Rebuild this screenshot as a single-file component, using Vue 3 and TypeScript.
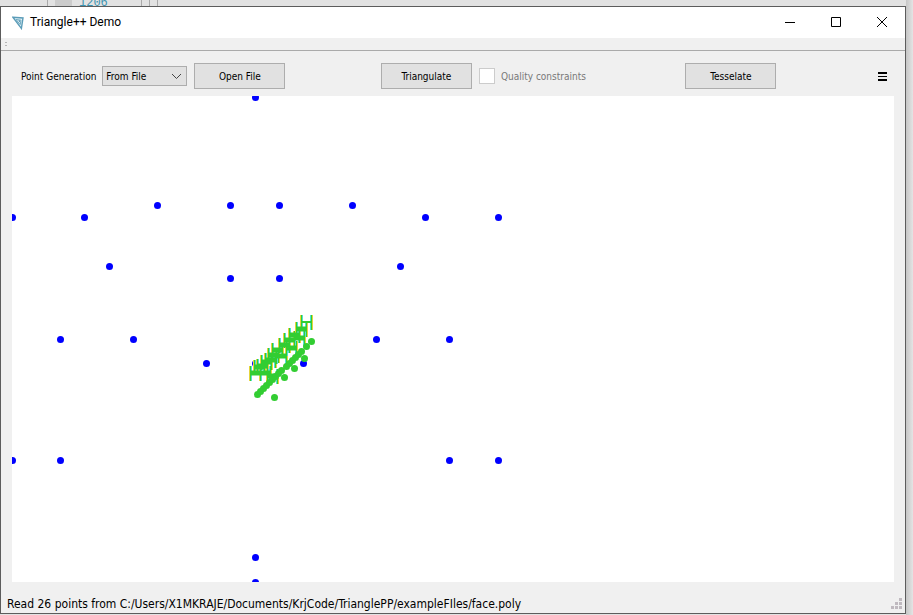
<script setup lang="ts">
import { ref } from 'vue'

type Point = [number, number]

const source = ref('From File')
const quality = ref(false)

const points: Point[] = [
  [243, 1], [0, 121], [72, 121], [145, 109], [218, 109], [267, 109], [340, 109],
  [413, 121], [486, 121], [97, 170], [388, 170], [218, 182], [267, 182],
  [48, 243], [121, 243], [364, 243], [437, 243], [194, 267], [243, 267], [291, 267],
  [0, 364], [48, 364], [437, 364], [486, 364], [243, 461], [243, 486],
]

const marks: Point[] = [
  [245, 298], [248, 295], [251, 292], [254, 289], [257, 286], [260, 283],
  [262, 301], [263, 280], [266, 277], [269, 274], [272, 281], [274, 270],
  [277, 267], [280, 264], [282, 272], [283, 261], [286, 258], [289, 255],
  [292, 262], [294, 250], [299, 245],
]

const labels: Point[] = [
  [237, 270], [241, 264], [244, 263], [247, 270], [248, 259], [252, 257], [254, 273],
  [255, 252], [259, 247], [263, 253], [266, 242], [271, 237], [273, 245], [276, 232],
  [281, 235], [283, 226], [288, 219],
]
</script>

<template>
  <div class="desktop">
    <div class="behind" aria-hidden="true"><i></i><b></b><span>1206</span><i></i><i></i><i></i></div>
    <main class="window">
      <header class="titlebar">
        <svg class="logo" width="13" height="14" viewBox="0 0 13 14">
          <path d="M.8 1.2 11 2 9.4 12.4Z" fill="#e4f3f8" stroke="#5b9cb8" stroke-width="1.4" />
          <path d="M4 3.5 9 4.2 8.2 8.6Z" fill="none" stroke="#6fa9c0" />
          <path d="M6.4 4.6H8V6.5Z" fill="#3c7f9f" />
        </svg>
        <h1>Triangle++ Demo</h1>
        <div class="caption">
          <button type="button" aria-label="Minimize">
            <svg width="11" height="11"><path d="M0 5.5H10" /></svg>
          </button>
          <button type="button" aria-label="Maximize">
            <svg width="11" height="11"><path d="M.5 .5H9.5V9.5H.5Z" /></svg>
          </button>
          <button type="button" aria-label="Close">
            <svg width="11" height="11"><path d="M0 0 10 10M10 0 0 10" /></svg>
          </button>
        </div>
      </header>
      <div class="dock"><i></i><i></i></div>
      <div class="toolbar">
        <div class="group">
          <label for="source">Point Generation</label>
          <div class="combo">
            <select id="source" v-model="source">
              <option>From File</option>
            </select>
            <svg width="11" height="7"><path d="M1 1 5.5 5.5 10 1" /></svg>
          </div>
          <button type="button" class="push">Open File</button>
        </div>
        <div class="group">
          <button type="button" class="push">Triangulate</button>
          <label class="check">
            <input v-model="quality" type="checkbox" />
            <span>Quality constraints</span>
          </label>
        </div>
        <button type="button" class="push">Tesselate</button>
        <button type="button" class="menu" aria-label="Menu">
          <svg width="9" height="9"><path d="M0 0H9V2H0ZM0 4H9V5H0ZM0 7H9V9H0Z" /></svg>
        </button>
      </div>
      <svg class="canvas">
        <circle v-for="(p, i) in points" :key="i" :cx="p[0] + 0.5" :cy="p[1] + 0.5" r="3.5" fill="#00f" />
        <g v-for="(l, i) in labels" :key="'f' + i" :transform="`translate(${l[0]} ${l[1]})`" fill="none">
          <path d="M.5 0V15M12.5 0V15" stroke="#e5d43c" />
          <path d="M2.5 0V15M10.5 0V15" stroke="#55dfd2" />
        </g>
        <g v-for="(l, i) in labels" :key="'l' + i" :transform="`translate(${l[0]} ${l[1]})`" fill="none" stroke="#32cd32">
          <path d="M1.5 0V15M11.5 0V15" />
          <path d="M2 7H11" :stroke-width="i === labels.length - 1 ? 2 : 5" />
        </g>
        <circle v-for="(m, i) in marks" :key="'m' + i" :cx="m[0] + 0.5" :cy="m[1] + 0.5" r="3.5" fill="#32cd32" />
      </svg>
      <footer class="status">
        <span>Read 26 points from C:/Users/X1MKRAJE/Documents/KrjCode/TrianglePP/exampleFIles/face.poly</span>
        <svg width="11" height="11">
          <path d="M8 0h3v3h-3zM4 4h3v3h-3zM8 4h3v3h-3zM0 8h3v3h-3zM4 8h3v3h-3zM8 8h3v3h-3z" />
        </svg>
      </footer>
    </main>
  </div>
</template>

<style>
body {
  margin: 0;
}
</style>

<style scoped>
* {
  box-sizing: border-box;
}
.desktop {
  display: grid;
  grid-template-rows: 6px 1fr;
  height: 100vh;
  padding: 0 7px 1px 0;
  background: linear-gradient(90deg, #c6c6c6, #e4e4e4) right / 7px 100% no-repeat, #e2e2e2;
}
.behind {
  display: flex;
  align-items: flex-end;
  gap: 7px;
  padding-left: 47px;
  font: 12px/6px "Liberation Mono", monospace;
  color: #3c93b0;
}
.behind i {
  width: 1px;
  height: 6px;
  background: #aaa;
}
.behind b {
  width: 17px;
  height: 6px;
  background: #ccc;
}
.behind span {
  margin-right: 26px;
}
.window {
  display: flex;
  flex-direction: column;
  min-height: 0;
  border: 1px solid #5c5c5c;
  background: #f0f0f0;
  color: #000;
  font: 10px/16px "DejaVu Sans Condensed", "DejaVu Sans", sans-serif;
}
.titlebar {
  display: flex;
  align-items: center;
  height: 31px;
  padding-left: 11px;
  background: #fff;
}
h1 {
  flex: 1;
  margin: 0 0 2px 5px;
  font: 12px/16px Roboto, sans-serif;
}
.caption {
  display: flex;
}
.caption button {
  display: grid;
  place-items: center;
  width: 46px;
  height: 28px;
  padding: 0;
  border: 0;
  background: none;
}
.caption path {
  fill: none;
  stroke: #000;
}
.dock {
  display: flex;
  flex-direction: column;
  gap: 2px;
  height: 13px;
  padding: 4px;
  border-bottom: 1px solid #aaa;
}
.dock i {
  width: 2px;
  height: 2px;
  background: #b5b5b5;
}
.toolbar {
  display: flex;
  align-items: center;
  justify-content: space-between;
  height: 45px;
  padding: 6px 13px 1px 20px;
}
.toolbar label {
  line-height: 18px;
}
.group {
  display: flex;
  align-items: center;
  gap: 7px;
}
.group > label:first-child {
  margin-right: -1px;
  padding-top: 2px;
}
.combo {
  position: relative;
  width: 85px;
  height: 20px;
}
.combo select {
  width: 100%;
  height: 100%;
  padding: 2px 3px 0;
  border: 1px solid #adadad;
  border-radius: 0;
  background: #e1e1e1;
  color: #000;
  font: inherit;
  appearance: none;
}
.combo svg {
  position: absolute;
  top: 7px;
  right: 5px;
  fill: none;
  stroke: #444;
  pointer-events: none;
}
.push {
  width: 91px;
  height: 26px;
  padding: 2px 0 0;
  border: 1px solid #adadad;
  background: #e1e1e1;
  color: #000;
  font: inherit;
}
.check {
  display: flex;
  align-items: center;
  gap: 6px;
  padding-right: 4px;
  color: #787878;
}
.check span {
  padding-top: 2px;
}
.check input {
  width: 16px;
  height: 16px;
  margin: 0;
  border: 1px solid #ccc;
  background: #fff;
  appearance: none;
}
.check input:checked {
  background: #777;
}
.menu {
  display: grid;
  place-items: center;
  width: 20px;
  height: 20px;
  padding: 0;
  border: 0;
  background: none;
}
.canvas {
  flex: 1;
  min-height: 0;
  width: auto;
  margin: 0 11px;
  background: #fff;
}
.status {
  display: flex;
  align-items: center;
  justify-content: space-between;
  height: 31px;
  padding: 12px 3px 0 6px;
  font-size: 12px;
}
.status svg {
  fill: #bfb9bf;
}
</style>
